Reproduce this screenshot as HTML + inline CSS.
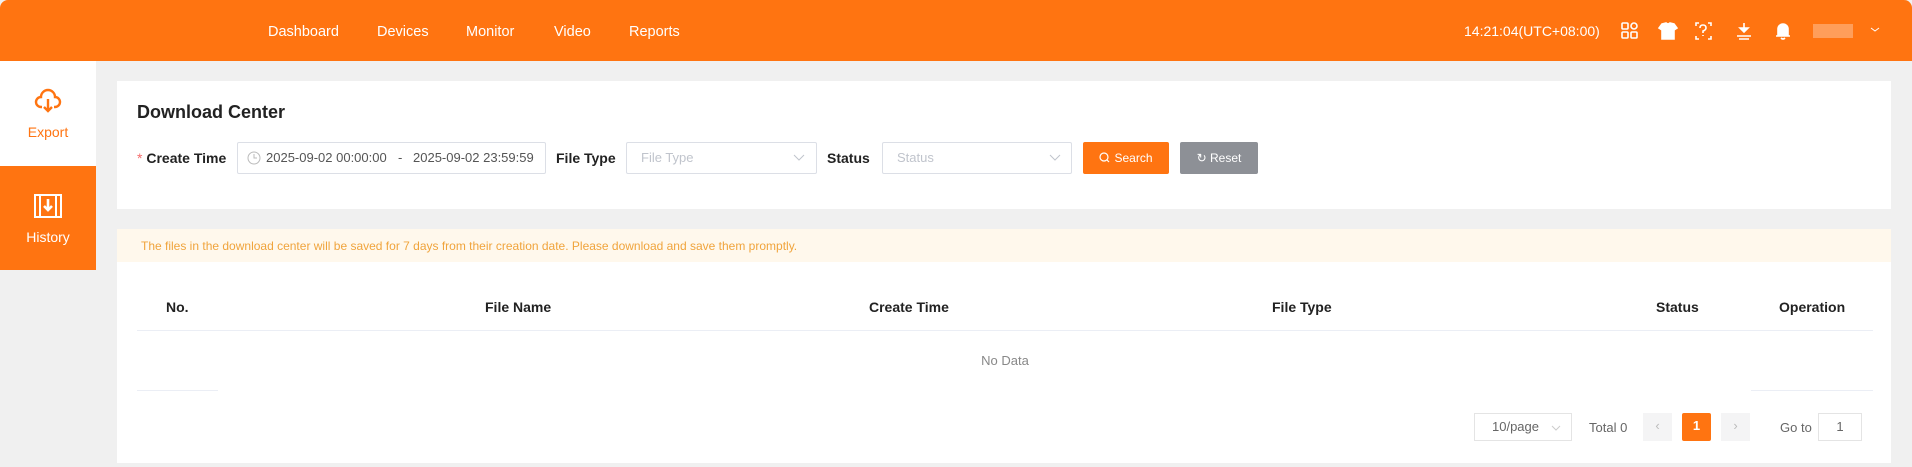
<!DOCTYPE html>
<html><head><meta charset="utf-8"><style>
*{box-sizing:border-box;margin:0;padding:0}
body{width:1912px;height:467px;background:#f0f0f0;font-family:"Liberation Sans",Arial,sans-serif;position:relative;overflow:hidden;color:#333}
.abs{position:absolute}
.hdr{left:0;top:0;width:1912px;height:61px;background:#ff7411;border-radius:8px 8px 0 0}
.nav{top:24px;color:#fff;font-size:14.5px}
.card{background:#fff}
.lbl{font-size:14px;font-weight:bold;color:#222}
.inp{border:1px solid #dcdfe6;border-radius:2px;background:#fff;height:32px}
.ph{color:#c0c4cc;font-size:13px}
.th{top:299px;font-size:14px;font-weight:bold;color:#222}
.pg{border:1px solid #e4e4e4;height:28px;top:413px;font-size:13px;color:#666;text-align:center;line-height:26px}
.chev{position:absolute}
</style></head><body>
<div class="abs hdr"></div>
<div class="abs nav" style="left:268px">Dashboard</div>
<div class="abs nav" style="left:377px">Devices</div>
<div class="abs nav" style="left:466px">Monitor</div>
<div class="abs nav" style="left:554px">Video</div>
<div class="abs nav" style="left:629px">Reports</div>
<div class="abs" style="left:1464px;top:23px;color:#fff;font-size:14px">14:21:04(UTC+08:00)</div>
<svg class="abs" style="left:1620px;top:20px" width="260" height="22" viewBox="0 0 260 22" fill="none" stroke="#fff" stroke-width="1.6">
<rect x="2" y="3" width="6" height="6" rx="1"/><circle cx="14" cy="6" r="3"/><rect x="2" y="12" width="6" height="6" rx="1"/><rect x="11" y="12" width="6" height="6" rx="1"/>
<path d="M42 4l4-1q2 2 4 0l4 1 3 4-3 2v9h-12v-9l-3-2z" fill="#fff"/>
<path d="M79 3h-3v3M88 3h3v3M79 19h-3v-3M88 19h3v-3"/><path d="M80 8q0-3 3-3t3 3q0 2-3 3v2M83 15v1"/>
<path d="M124 3v9M117 16h14M119 19h10"/><path d="M120 8h8l-4 4z" fill="#fff"/>
<path d="M158 16v-7a5 5 0 0110 0v7h2H156z" fill="#fff"/><path d="M161 18q2 2 4 0"/>
<rect x="193" y="4" width="40" height="14" fill="#ff9e5a" stroke="none"/>
<path d="M251 8l4 3 4-3" stroke-width="1"/>
</svg>
<div class="abs" style="left:0;top:61px;width:96px;height:105px;background:#fff"></div>
<div class="abs" style="left:0;top:166px;width:96px;height:104px;background:#ff7411"></div>
<svg class="abs" style="left:33px;top:86px" width="30" height="30" viewBox="0 0 30 30" fill="none" stroke="#ff7411" stroke-width="2.4"><path d="M9 21h-1a5 5 0 010-10 7 7 0 0114 0 5 5 0 010 10h-1"/><path d="M15 13v12M11 21l4 4 4-4"/></svg>
<div class="abs" style="left:0;top:124px;width:96px;text-align:center;color:#ff7411;font-size:14px">Export</div>
<svg class="abs" style="left:33px;top:193px" width="30" height="26" viewBox="0 0 30 26" fill="none" stroke="#fff" stroke-width="2"><rect x="2" y="2" width="26" height="22"/><path d="M7 2v22M23 2v22"/><path d="M15 6v11M11 13l4 4 4-4" stroke-width="2.6"/></svg>
<div class="abs" style="left:0;top:229px;width:96px;text-align:center;color:#fff;font-size:14px">History</div>
<div class="abs card" style="left:117px;top:81px;width:1774px;height:128px"></div>
<div class="abs" style="left:137px;top:102px;font-size:18px;font-weight:bold;color:#222">Download Center</div>
<div class="abs lbl" style="left:137px;top:150px"><span style="color:#f56c6c;font-weight:normal">* </span>Create Time</div>
<div class="abs inp" style="left:237px;top:142px;width:309px"></div>
<svg class="abs" style="left:247px;top:151px" width="14" height="14" viewBox="0 0 14 14" fill="none" stroke="#bbb"><circle cx="7" cy="7" r="6"/><path d="M7 3v4h3"/></svg>
<div class="abs" style="left:266px;top:150px;font-size:13px;color:#555">2025-09-02 00:00:00</div>
<div class="abs" style="left:398px;top:150px;font-size:13px;color:#555">-</div>
<div class="abs" style="left:413px;top:150px;font-size:13px;color:#555">2025-09-02 23:59:59</div>
<div class="abs lbl" style="left:556px;top:150px">File Type</div>
<div class="abs inp" style="left:626px;top:142px;width:191px"></div>
<div class="abs ph" style="left:641px;top:150px">File Type</div>
<svg class="chev" style="left:793px;top:154px" width="12" height="8"><path d="M1 1l5 5 5-5" fill="none" stroke="#c0c4cc"/></svg>
<div class="abs lbl" style="left:827px;top:150px">Status</div>
<div class="abs inp" style="left:882px;top:142px;width:190px"></div>
<div class="abs ph" style="left:897px;top:150px">Status</div>
<svg class="chev" style="left:1049px;top:154px" width="12" height="8"><path d="M1 1l5 5 5-5" fill="none" stroke="#c0c4cc"/></svg>
<div class="abs" style="left:1083px;top:142px;width:86px;height:32px;background:#ff7411;border-radius:2px;color:#fff;font-size:12px;text-align:center;line-height:32px"><svg width="11" height="11" style="vertical-align:-1px;margin-right:4px"><circle cx="5" cy="5" r="4" fill="none" stroke="#fff" stroke-width="1.2"/><path d="M8 8l2 2" stroke="#fff" stroke-width="1.2"/></svg>Search</div>
<div class="abs" style="left:1180px;top:142px;width:78px;height:32px;background:#8d9096;border-radius:2px;color:#fff;font-size:12px;text-align:center;line-height:32px">&#8635; Reset</div>
<div class="abs card" style="left:117px;top:229px;width:1774px;height:234px"></div>
<div class="abs" style="left:117px;top:229px;width:1774px;height:33px;background:#fff8ec"></div>
<div class="abs" style="left:141px;top:239px;font-size:12px;color:#f0a43c">The files in the download center will be saved for 7 days from their creation date. Please download and save them promptly.</div>
<div class="abs th" style="left:166px">No.</div>
<div class="abs th" style="left:485px">File Name</div>
<div class="abs th" style="left:869px">Create Time</div>
<div class="abs th" style="left:1272px">File Type</div>
<div class="abs th" style="left:1656px">Status</div>
<div class="abs th" style="left:1779px">Operation</div>
<div class="abs" style="left:137px;top:330px;width:1736px;height:1px;background:#ebeef5"></div>
<div class="abs" style="left:137px;top:353px;width:1736px;text-align:center;font-size:13px;color:#888">No Data</div>
<div class="abs" style="left:137px;top:390px;width:81px;height:1px;background:#ebeef5"></div>
<div class="abs" style="left:1751px;top:390px;width:122px;height:1px;background:#ebeef5"></div>
<div class="abs pg" style="left:1474px;width:98px;text-align:left;padding-left:17px">10/page<svg style="position:absolute;right:10px;top:11px" width="10" height="6"><path d="M1 1l4 4 4-4" fill="none" stroke="#ccc"/></svg></div>
<div class="abs" style="left:1589px;top:420px;font-size:13px;color:#666">Total 0</div>
<div class="abs pg" style="left:1643px;width:29px;background:#f4f4f5;border:none;color:#bbb">‹</div>
<div class="abs pg" style="left:1682px;width:29px;background:#ff7411;border:none;color:#fff;font-weight:bold;border-radius:2px">1</div>
<div class="abs pg" style="left:1721px;width:29px;background:#f4f4f5;border:none;color:#bbb">›</div>
<div class="abs" style="left:1780px;top:420px;font-size:13px;color:#666">Go to</div>
<div class="abs pg" style="left:1818px;width:44px">1</div>
</body></html>
